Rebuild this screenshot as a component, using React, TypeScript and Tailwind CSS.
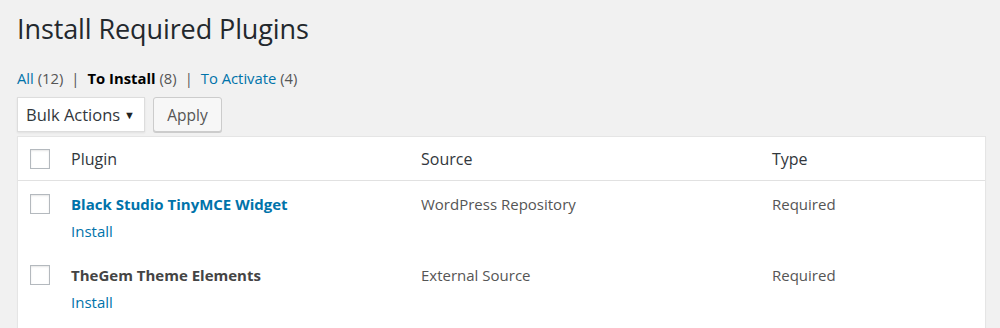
import React from "react";

function Box() {
  return <span className="block w-[20px] h-[20px] border border-[#b4b9be] bg-white shadow-[inset_0_1px_2px_rgba(0,0,0,0.1)]" />;
}

export default function App() {
  const rows = [
    { name: "Black Studio TinyMCE Widget", link: true, source: "WordPress Repository", type: "Required" },
    { name: "TheGem Theme Elements", link: false, source: "External Source", type: "Required" },
  ];
  return (
    <div className="w-[1000px] h-[328px] overflow-hidden bg-[#f1f1f1] text-[14px] text-[#444]" style={{ fontFamily: '"Open Sans", sans-serif' }}>
      <div className="pl-[17px] pr-[15px]">
        <h1 className="pt-[10px] text-[27px] leading-[38px] text-[#23282d] font-normal tracking-[-0.1px]">Install Required Plugins</h1>
        <div className="mt-[20px] flex items-center h-[20px] text-[14.8px] text-[#555]">
          <a className="text-[#0073aa]">All <span className="text-[#555]">(12)</span></a>
          <span className="mx-[8px]">|</span>
          <span className="font-bold text-black">To Install</span>
          <span className="ml-[4px]">(8)</span>
          <span className="mx-[8px]">|</span>
          <a className="text-[#0073aa]">To Activate <span className="text-[#555]">(4)</span></a>
        </div>
        <div className="mt-[9px] flex gap-[8px]">
          <div className="w-[128px] h-[35px] pt-[2px] bg-white border border-[#ddd] shadow-[0_1px_2px_rgba(0,0,0,0.07)] flex items-center pl-[8px] pr-[9px] text-[#32373c] text-[16.5px]">
            <span className="flex-1">Bulk Actions</span>
            <span className="text-[11px] text-[#222]">▼</span>
          </div>
          <div className="w-[69px] h-[35px] pt-[2px] bg-[#f7f7f7] border border-[#ccc] rounded-[3px] shadow-[0_1px_0_#ccc] flex items-center justify-center text-[15.5px] text-[#555]">Apply</div>
        </div>
        <div className="mt-[4px] w-[969px] h-[220px] bg-white border border-[#e5e5e5] shadow-[0_1px_1px_rgba(0,0,0,0.04)]">
          <div className="flex items-center h-[44px] border-b border-[#e1e1e1] text-[16px] text-[#32373c]">
            <div className="w-[53px] pl-[12px]"><Box /></div>
            <div className="w-[350px]">Plugin</div>
            <div className="w-[351px]">Source</div>
            <div>Type</div>
          </div>
          {rows.map((r, i) => (
            <div key={i} className="flex pt-[13px] h-[71px] text-[15px]">
              <div className="w-[53px] pl-[12px]"><Box /></div>
              <div className="w-[350px]">
                <div className={"font-bold text-[15px] leading-[20px] " + (r.link ? "text-[#0073aa]" : "text-[#444]")}>{r.name}</div>
                <div className="mt-[7px] text-[#0073aa] leading-[20px]">Install</div>
              </div>
              <div className="w-[351px] text-[#555] leading-[20px]">{r.source}</div>
              <div className="text-[#555] leading-[20px]">{r.type}</div>
            </div>
          ))}
        </div>
      </div>
    </div>
  );
}
